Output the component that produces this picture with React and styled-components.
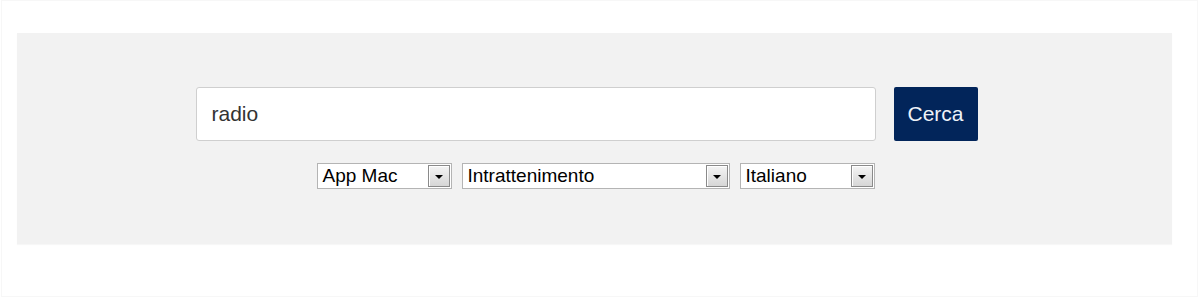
import React from "react";
import styled, { createGlobalStyle } from "styled-components";

const GlobalStyle = createGlobalStyle`
  html, body {
    margin: 0;
    padding: 0;
    background: #fff;
    font-family: "Liberation Sans", Arial, sans-serif;
  }
`;

const Frame = styled.div`
  box-sizing: border-box;
  width: 1197px;
  height: 297px;
  margin-left: 1px;
  border: 1px solid #f7f7f7;
  padding: 32px 25px 0 15px;
`;

const Panel = styled.section`
  height: 211px;
  background: #f2f2f2;
  box-shadow: 0 1px 1px rgba(0, 0, 0, 0.03);
  display: flex;
  flex-direction: column;
  align-items: center;
  padding-top: 54px;
  box-sizing: border-box;
`;

const SearchRow = styled.form`
  display: flex;
  gap: 18px;
  margin: 0 16px 0 0;
`;

const SearchInput = styled.input`
  box-sizing: border-box;
  width: 680px;
  height: 54px;
  border: 1px solid #cfcfcf;
  border-radius: 3px;
  background: #fff;
  padding: 0 15px;
  font-family: "Liberation Sans", Arial, sans-serif;
  font-size: 21px;
  color: #333;
  outline: none;
`;

const SearchButton = styled.button`
  box-sizing: border-box;
  width: 84px;
  height: 54px;
  border: none;
  border-radius: 2px;
  background: #02255a;
  color: #eef2f8;
  font-family: "Liberation Sans", Arial, sans-serif;
  font-size: 21px;
  padding: 0;
  cursor: pointer;
`;

const FilterRow = styled.div`
  display: flex;
  gap: 10px;
  margin: 22px 0 0 2px;
`;

const SelectBox = styled.div`
  box-sizing: border-box;
  width: ${(p) => p.$width}px;
  height: 26px;
  border: 1px solid #b4b4b4;
  background: #fff;
  display: flex;
  align-items: center;
  justify-content: space-between;
  padding: 0 1px 0 5px;
`;

const SelectLabel = styled.span`
  font-size: 19px;
  color: #000;
  line-height: 24px;
  white-space: nowrap;
`;

const ArrowButton = styled.span`
  box-sizing: border-box;
  width: 22px;
  height: 22px;
  border: 1px solid #8a8a8a;
  background: linear-gradient(#f4f4f4, #d6d6d6);
  box-shadow: inset 1px 1px 0 #fff;
  display: flex;
  align-items: center;
  justify-content: center;

  &::after {
    content: "";
    border-left: 4px solid transparent;
    border-right: 4px solid transparent;
    border-top: 4px solid #000;
    margin-top: 2px;
  }
`;

const filters = [
  { label: "App Mac", width: 135 },
  { label: "Intrattenimento", width: 268 },
  { label: "Italiano", width: 135 },
];

const Select = ({ label, width }) => (
  <SelectBox $width={width}>
    <SelectLabel>{label}</SelectLabel>
    <ArrowButton />
  </SelectBox>
);

export default function App() {
  return (
    <>
      <GlobalStyle />
      <Frame>
        <Panel>
          <SearchRow onSubmit={(e) => e.preventDefault()}>
            <SearchInput defaultValue="radio" />
            <SearchButton type="submit">Cerca</SearchButton>
          </SearchRow>
          <FilterRow>
            {filters.map((f) => (
              <Select key={f.label} {...f} />
            ))}
          </FilterRow>
        </Panel>
      </Frame>
    </>
  );
}
